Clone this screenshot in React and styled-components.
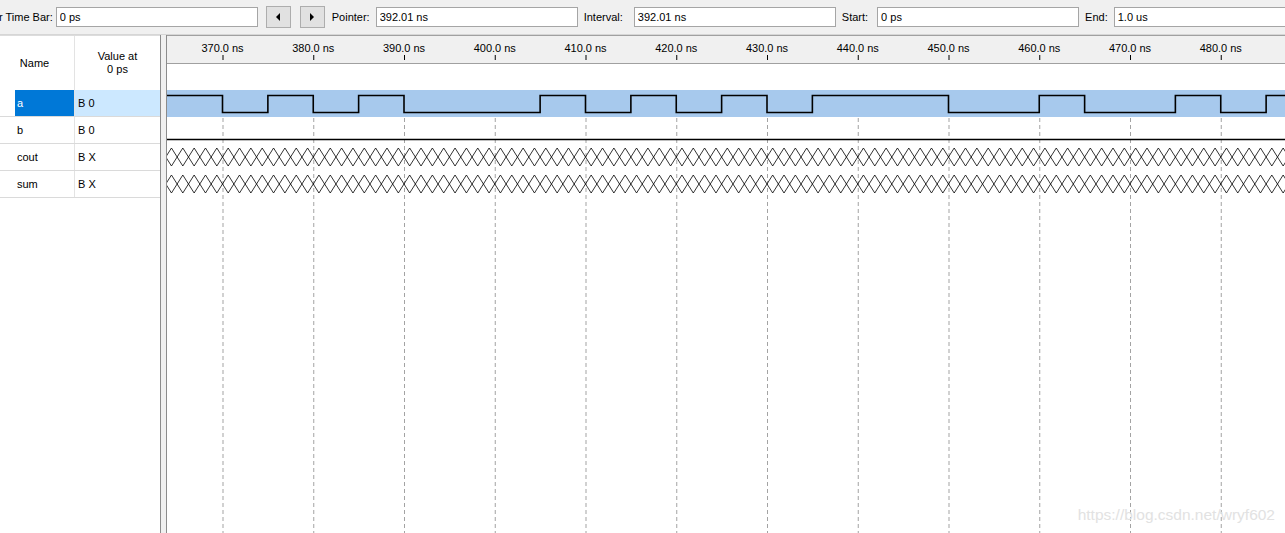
import styled, { createGlobalStyle } from 'styled-components';

const GlobalStyle = createGlobalStyle`
  html, body {
    margin: 0;
    padding: 0;
    overflow: hidden;
  }
  body {
    font-family: "Liberation Sans", Arial, sans-serif;
    font-size: 11px;
    color: #000;
    background: #ffffff;
  }
`;

// time -> x inside the waveform canvas
const NS_PX = 9.075;
const tx = (t) => 55.5 + (t - 370) * NS_PX;

const TICKS = [370, 380, 390, 400, 410, 420, 430, 440, 450, 460, 470, 480];
const A_TOGGLES = [370, 375, 380, 385, 390, 405, 410, 415, 420, 425, 430, 435, 450, 460, 465, 475, 480, 485];

const SIGNALS = [
  { name: 'a', value: 'B 0', selected: true },
  { name: 'b', value: 'B 0' },
  { name: 'cout', value: 'B X' },
  { name: 'sum', value: 'B X' },
];

const Window = styled.div`
  position: relative;
  height: 100vh;
  display: flex;
  flex-direction: column;
  background: #fff;
`;

const Toolbar = styled.div`
  height: 34px;
  flex: none;
  display: flex;
  align-items: center;
  background: #f0f0f0;
  border-bottom: 1px solid #d6d6d6;
  overflow: hidden;
  white-space: nowrap;
`;

const ToolLabel = styled.span`
  flex: none;
  margin: 0 ${(p) => p.$trail || 6}px 0 ${(p) => p.$lead || 0}px;
`;

const Field = styled.input`
  flex: none;
  box-sizing: border-box;
  width: ${(p) => p.$w || 202}px;
  height: 20px;
  margin: 0;
  padding: 0 3px;
  border: 1px solid #a5a5a5;
  background: #fff;
  font: 11px "Liberation Sans", Arial, sans-serif;
  color: #000;
  outline: none;
`;

const NavButton = styled.button`
  flex: none;
  box-sizing: border-box;
  width: 25px;
  height: 22px;
  margin: 0 0 0 ${(p) => p.$lead}px;
  padding: 0;
  display: flex;
  align-items: center;
  justify-content: center;
  background: #e1e1e1;
  border: 1px solid #adadad;
`;

const Arrow = styled.span`
  width: 0;
  height: 0;
  border-top: 4px solid transparent;
  border-bottom: 4px solid transparent;
  ${(p) => (p.$dir === 'left' ? 'border-right: 4px solid #000;' : 'border-left: 4px solid #000;')}
`;

const Body = styled.div`
  flex: 1;
  display: flex;
  min-height: 0;
`;

const SignalPanel = styled.div`
  width: 160px;
  flex: none;
  background: #fff;
  border-top: 1px solid #dcdcdc;
`;

const HeaderRow = styled.div`
  display: grid;
  grid-template-columns: 74px 86px;
  height: 54px;
`;

const HeaderCell = styled.div`
  display: flex;
  align-items: center;
  justify-content: center;
  text-align: center;
  line-height: 13px;
  padding-right: ${(p) => (p.$divider ? 0 : 5)}px;
  border-left: ${(p) => (p.$divider ? '1px solid #e3e3e3' : 'none')};
`;

const SignalRow = styled.div`
  display: grid;
  grid-template-columns: 15px 59px 86px;
  height: 26px;
  border-bottom: 1px solid #dadada;
`;

const NameCell = styled.div`
  display: flex;
  align-items: center;
  padding-left: 2px;
  background: ${(p) => (p.$selected ? '#0078d7' : 'transparent')};
  color: ${(p) => (p.$selected ? '#fff' : '#000')};
`;

const ValueCell = styled.div`
  display: flex;
  align-items: center;
  padding-left: 3px;
  border-left: 1px solid #e3e3e3;
  background: ${(p) => (p.$selected ? '#cce8ff' : 'transparent')};
`;

const Splitter = styled.div`
  width: 5px;
  flex: none;
  background: #f0f0f0;
  border-left: 1px solid #8c8c8c;
  border-right: 1px solid #8c8c8c;
`;

const WavePanel = styled.div`
  flex: 1;
  display: flex;
  flex-direction: column;
  min-width: 0;
  border-top: 1px solid #a0a0a0;
`;

const Ruler = styled.svg`
  flex: none;
  display: block;
  width: 100%;
  height: 27px;
  background: #f0f0f0;
  border-bottom: 1px solid #a0a0a0;
`;

const Canvas = styled.svg`
  flex: 1;
  display: block;
  width: 100%;
  background: #fff;
`;

const Watermark = styled.div`
  position: absolute;
  right: 10px;
  bottom: 9px;
  font: 15.5px "Liberation Sans", Arial, sans-serif;
  color: #e2e2e2;
`;

function squarePath(toggles, hi, lo, end) {
  let level = true;
  let d = `M -5 ${hi}`;
  toggles.forEach((t) => {
    const x = tx(t);
    d += ` H ${x} V ${level ? lo : hi}`;
    level = !level;
  });
  d += ` H ${end}`;
  return d;
}

function crossPath(top, bottom, end) {
  const p = NS_PX * 1.25;
  let x0 = tx(370) - p / 2;
  while (x0 > -p) x0 -= p;
  let d = '';
  for (let x = x0; x < end; x += p) {
    d += `M ${x} ${top} L ${x + p} ${bottom} M ${x} ${bottom} L ${x + p} ${top} `;
  }
  return d;
}

function Waveforms() {
  const W = 1130;
  return (
    <Canvas>
      {TICKS.map((t) => (
        <line
          key={t}
          x1={tx(t) + 0.5}
          x2={tx(t) + 0.5}
          y1={54}
          y2={480}
          stroke="#a3a3a3"
          strokeDasharray="4 3"
        />
      ))}
      <rect x="0" y="26" width={W} height="27" fill="#a7c9ed" />
      <path d={squarePath(A_TOGGLES, 31.5, 48.5, W)} fill="none" stroke="#000" strokeWidth="1.6" />
      <line x1="0" x2={W} y1="75.5" y2="75.5" stroke="#000" strokeWidth="1.3" />
      <path d={crossPath(84, 102, W)} fill="none" stroke="#000" strokeWidth="0.8" />
      <path d={crossPath(111, 129, W)} fill="none" stroke="#000" strokeWidth="0.8" />
    </Canvas>
  );
}

function TimeRuler() {
  return (
    <Ruler>
      {TICKS.map((t) => (
        <g key={t}>
          <text
            x={tx(t)}
            y="16"
            textAnchor="middle"
            fontFamily='"Liberation Sans", Arial, sans-serif'
            fontSize="11"
            fill="#000"
          >
            {`${t}.0 ns`}
          </text>
          <line x1={tx(t) + 0.5} x2={tx(t) + 0.5} y1="19" y2="24" stroke="#000" />
        </g>
      ))}
    </Ruler>
  );
}

export default function App() {
  return (
    <Window>
      <GlobalStyle />
      <Toolbar>
        <ToolLabel $lead={-31} $trail={3}>Master Time Bar:</ToolLabel>
        <Field readOnly value="0 ps" />
        <NavButton $lead={8}>
          <Arrow $dir="left" />
        </NavButton>
        <NavButton $lead={9}>
          <Arrow $dir="right" />
        </NavButton>
        <ToolLabel $lead={7}>Pointer:</ToolLabel>
        <Field readOnly value="392.01 ns" />
        <ToolLabel $lead={6} $trail={11}>Interval:</ToolLabel>
        <Field readOnly value="392.01 ns" />
        <ToolLabel $lead={6} $trail={9}>Start:</ToolLabel>
        <Field readOnly value="0 ps" />
        <ToolLabel $lead={6}>End:</ToolLabel>
        <Field readOnly value="1.0 us" />
      </Toolbar>
      <Body>
        <SignalPanel>
          <HeaderRow>
            <HeaderCell>Name</HeaderCell>
            <HeaderCell $divider>
              Value at
              <br />
              0 ps
            </HeaderCell>
          </HeaderRow>
          {SIGNALS.map((s) => (
            <SignalRow key={s.name}>
              <span />
              <NameCell $selected={s.selected}>{s.name}</NameCell>
              <ValueCell $selected={s.selected}>{s.value}</ValueCell>
            </SignalRow>
          ))}
        </SignalPanel>
        <Splitter />
        <WavePanel>
          <TimeRuler />
          <Waveforms />
        </WavePanel>
      </Body>
      <Watermark>https://blog.csdn.net/wryf602</Watermark>
    </Window>
  );
}
